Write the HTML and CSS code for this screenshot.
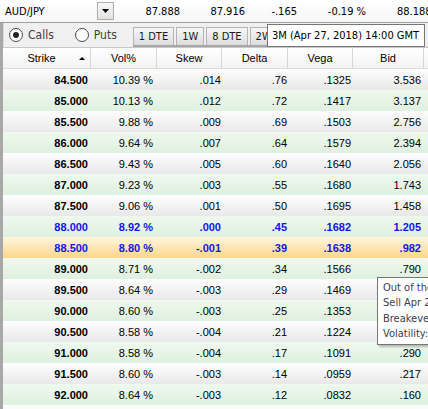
FILE: index.html
```html
<!DOCTYPE html>
<html lang="en">
<head>
    <meta charset="UTF-8">
    <title>Option Chain - AUD/JPY</title>
    <link rel="stylesheet" href="styles.css">
</head>
<body>
    <div class="quote-bar">
        <span class="symbol">AUD/JPY</span>
        <span class="drop"><svg width="7" height="4" viewBox="0 0 7 4"><path d="M0 0h7L3.5 4z" fill="#000"/></svg></span>
        <span class="quote q-bid">87.888</span>
        <span class="quote q-ask">87.916</span>
        <span class="quote q-chg">-.165</span>
        <span class="quote q-pct">-0.19 %</span>
        <span class="quote q-high">88.188</span>
    </div>
    <div class="frame">
        <div class="toolbar">
            <label class="radio checked"><span class="dot"></span>Calls</label>
            <label class="radio"><span class="dot"></span>Puts</label>
            <div class="tabs">
                <span class="tab">1 DTE</span>
                <span class="tab">1W</span>
                <span class="tab">8 DTE</span>
                <span class="tab">2W</span>
            </div>
            <div class="tip tip-expiry">3M (Apr 27, 2018) 14:00 GMT</div>
        </div>
        <div class="grid">
            <div class="row head">
                <span class="c strike">Strike<i class="sort"></i></span>
                <span class="c">Vol%</span>
                <span class="c">Skew</span>
                <span class="c">Delta</span>
                <span class="c">Vega</span>
                <span class="c">Bid</span>
                <span class="c last"></span>
            </div>
            <div class="row gray"><span class="c strike">84.500</span><span class="c vol">10.39 %</span><span class="c skew">.014</span><span class="c delta">.76</span><span class="c vega">.1325</span><span class="c bid">3.536</span></div>
            <div class="row green"><span class="c strike">85.000</span><span class="c vol">10.13 %</span><span class="c skew">.012</span><span class="c delta">.72</span><span class="c vega">.1417</span><span class="c bid">3.137</span></div>
            <div class="row gray"><span class="c strike">85.500</span><span class="c vol">9.88 %</span><span class="c skew">.009</span><span class="c delta">.69</span><span class="c vega">.1503</span><span class="c bid">2.756</span></div>
            <div class="row green"><span class="c strike">86.000</span><span class="c vol">9.64 %</span><span class="c skew">.007</span><span class="c delta">.64</span><span class="c vega">.1579</span><span class="c bid">2.394</span></div>
            <div class="row gray"><span class="c strike">86.500</span><span class="c vol">9.43 %</span><span class="c skew">.005</span><span class="c delta">.60</span><span class="c vega">.1640</span><span class="c bid">2.056</span></div>
            <div class="row green"><span class="c strike">87.000</span><span class="c vol">9.23 %</span><span class="c skew">.003</span><span class="c delta">.55</span><span class="c vega">.1680</span><span class="c bid">1.743</span></div>
            <div class="row gray"><span class="c strike">87.500</span><span class="c vol">9.06 %</span><span class="c skew">.001</span><span class="c delta">.50</span><span class="c vega">.1695</span><span class="c bid">1.458</span></div>
            <div class="row green atm"><span class="c strike">88.000</span><span class="c vol">8.92 %</span><span class="c skew">.000</span><span class="c delta">.45</span><span class="c vega">.1682</span><span class="c bid">1.205</span></div>
            <div class="row selected atm"><span class="c strike">88.500</span><span class="c vol">8.80 %</span><span class="c skew">-.001</span><span class="c delta">.39</span><span class="c vega">.1638</span><span class="c bid">.982</span></div>
            <div class="row green"><span class="c strike">89.000</span><span class="c vol">8.71 %</span><span class="c skew">-.002</span><span class="c delta">.34</span><span class="c vega">.1566</span><span class="c bid">.790</span></div>
            <div class="row gray"><span class="c strike">89.500</span><span class="c vol">8.64 %</span><span class="c skew">-.003</span><span class="c delta">.29</span><span class="c vega">.1469</span><span class="c bid"></span></div>
            <div class="row green"><span class="c strike">90.000</span><span class="c vol">8.60 %</span><span class="c skew">-.003</span><span class="c delta">.25</span><span class="c vega">.1353</span><span class="c bid"></span></div>
            <div class="row gray"><span class="c strike">90.500</span><span class="c vol">8.58 %</span><span class="c skew">-.004</span><span class="c delta">.21</span><span class="c vega">.1224</span><span class="c bid"></span></div>
            <div class="row green"><span class="c strike">91.000</span><span class="c vol">8.58 %</span><span class="c skew">-.004</span><span class="c delta">.17</span><span class="c vega">.1091</span><span class="c bid">.290</span></div>
            <div class="row gray"><span class="c strike">91.500</span><span class="c vol">8.60 %</span><span class="c skew">-.003</span><span class="c delta">.14</span><span class="c vega">.0959</span><span class="c bid">.217</span></div>
            <div class="row green"><span class="c strike">92.000</span><span class="c vol">8.64 %</span><span class="c skew">-.003</span><span class="c delta">.12</span><span class="c vega">.0832</span><span class="c bid">.160</span></div>
            <div class="row gray"></div>
        </div>
        <div class="tip tip-row">
            Out of the money<br>
            Sell Apr 27 88.500 Call<br>
            Breakeven: 89.482<br>
            Volatility: 8.80 %
        </div>
    </div>
</body>
</html>
```

FILE: styles.css
```css
body {
    margin: 0;
    width: 428px;
    height: 409px;
    overflow: hidden;
    font-family: "Liberation Sans", Arial, sans-serif;
    font-size: 11px;
    color: #000;
    background: #f0f0f0;
    position: relative;
}
.quote-bar {
    height: 22px;
    display: grid;
    grid-template-columns: 97px 17px 66px 65px 52px 73px 58px;
    align-items: center;
    background: linear-gradient(#ffffff, #f6f6f6);
    border-bottom: 1px solid #a0a0a0;
    font-family: "DejaVu Sans Condensed", "DejaVu Sans", sans-serif;
    font-stretch: condensed;
    font-size: 11px;
    white-space: nowrap;
    overflow: hidden;
}
.symbol {
    padding-left: 5px;
}
.drop {
    height: 18px;
    box-sizing: border-box;
    border: 1px solid #adadad;
    background: linear-gradient(#f8f8f8, #e2e2e2);
    display: flex;
    align-items: center;
    justify-content: center;
}
.quote {
    text-align: right;
}
.q-pct {
    padding-right: 4px;
}
.q-high {
    text-align: left;
    padding-left: 27px;
    overflow: hidden;
}
.frame {
    border-left: 3px solid #a8a8a8;
    box-shadow: inset 1px 0 0 #d8d8d8;
    position: relative;
    height: 386px;
}
.toolbar {
    height: 24px;
    display: flex;
    align-items: center;
    font-family: "DejaVu Sans Condensed", "DejaVu Sans", sans-serif;
    font-stretch: condensed;
    font-size: 12px;
    color: #404040;
    border-bottom: 1px solid #c8c8c8;
}
.radio {
    display: flex;
    align-items: center;
    gap: 5px;
    margin-left: 6px;
}
.radio + .radio {
    margin-left: 21px;
}
.dot {
    width: 12px;
    height: 12px;
    border-radius: 50%;
    border: 1px solid #4a4a4a;
    background: #fff;
    display: flex;
    align-items: center;
    justify-content: center;
}
.checked .dot::after {
    content: "";
    width: 6px;
    height: 6px;
    border-radius: 50%;
    background: #222;
}
.tabs {
    margin-left: 16px;
    align-self: flex-end;
    display: flex;
    gap: 2px;
    border-bottom: 2px solid #a6a6a6;
}
.tab {
    height: 17px;
    line-height: 17px;
    padding: 0 5px;
    border: 1px solid #b4b4b4;
    border-bottom: none;
    background: linear-gradient(#f6f6f6, #dddddd);
    color: #1a1a1a;
    font-size: 11px;
}
.tip {
    position: absolute;
    background: #fff;
    border: 1px solid #767676;
    font-family: "DejaVu Sans Condensed", "DejaVu Sans", sans-serif;
    font-stretch: condensed;
    font-size: 11px;
    white-space: nowrap;
    overflow: hidden;
}
.tip-expiry {
    left: 264px;
    top: 1px;
    width: 152px;
    height: 21px;
    line-height: 21px;
    padding-left: 4px;
    color: #000;
}
.tip-row {
    left: 374px;
    top: 254px;
    width: 90px;
    padding: 2px 5px 3px;
    line-height: 15.3px;
    color: #3c3c4c;
    box-shadow: 2px 2px 2px rgba(0, 0, 0, 0.25);
}
.grid {
    display: flex;
    flex-direction: column;
}
.row {
    height: 21px;
    display: grid;
    grid-template-columns: 88px 66px 65px 66px 65px 71px 1fr;
    align-items: center;
    white-space: nowrap;
}
.c {
    text-align: right;
    padding-right: 2px;
}
.strike {
    font-weight: bold;
    padding-right: 3px;
}
.vol {
    padding-right: 4px;
}
.skew, .delta {
    padding-right: 1px;
}
.bid {
    padding-right: 3px;
}
.head {
    background: linear-gradient(#ffffff, #f3f3f3);
    border-bottom: 1px solid #dcdcdc;
    height: 20px;
}
.head .c {
    height: 20px;
    line-height: 20px;
    text-align: center;
    padding: 0;
    font-weight: normal;
    border-right: 1px solid #d6d6d6;
}
.head .strike {
    padding-right: 10px;
    position: relative;
}
.head .last {
    border-right: none;
}
.sort {
    position: absolute;
    right: 5px;
    top: 9px;
    width: 0;
    height: 0;
    border-left: 3px solid transparent;
    border-right: 3px solid transparent;
    border-bottom: 3px solid #000;
}
.gray {
    background: linear-gradient(#fefefe, #e8e8e8);
}
.green {
    background: linear-gradient(#eff9ef, #dff0df);
}
.selected {
    background: linear-gradient(#fff6de, #fcd68a);
}
.atm .c {
    color: #1414ee;
    font-weight: bold;
}
```
